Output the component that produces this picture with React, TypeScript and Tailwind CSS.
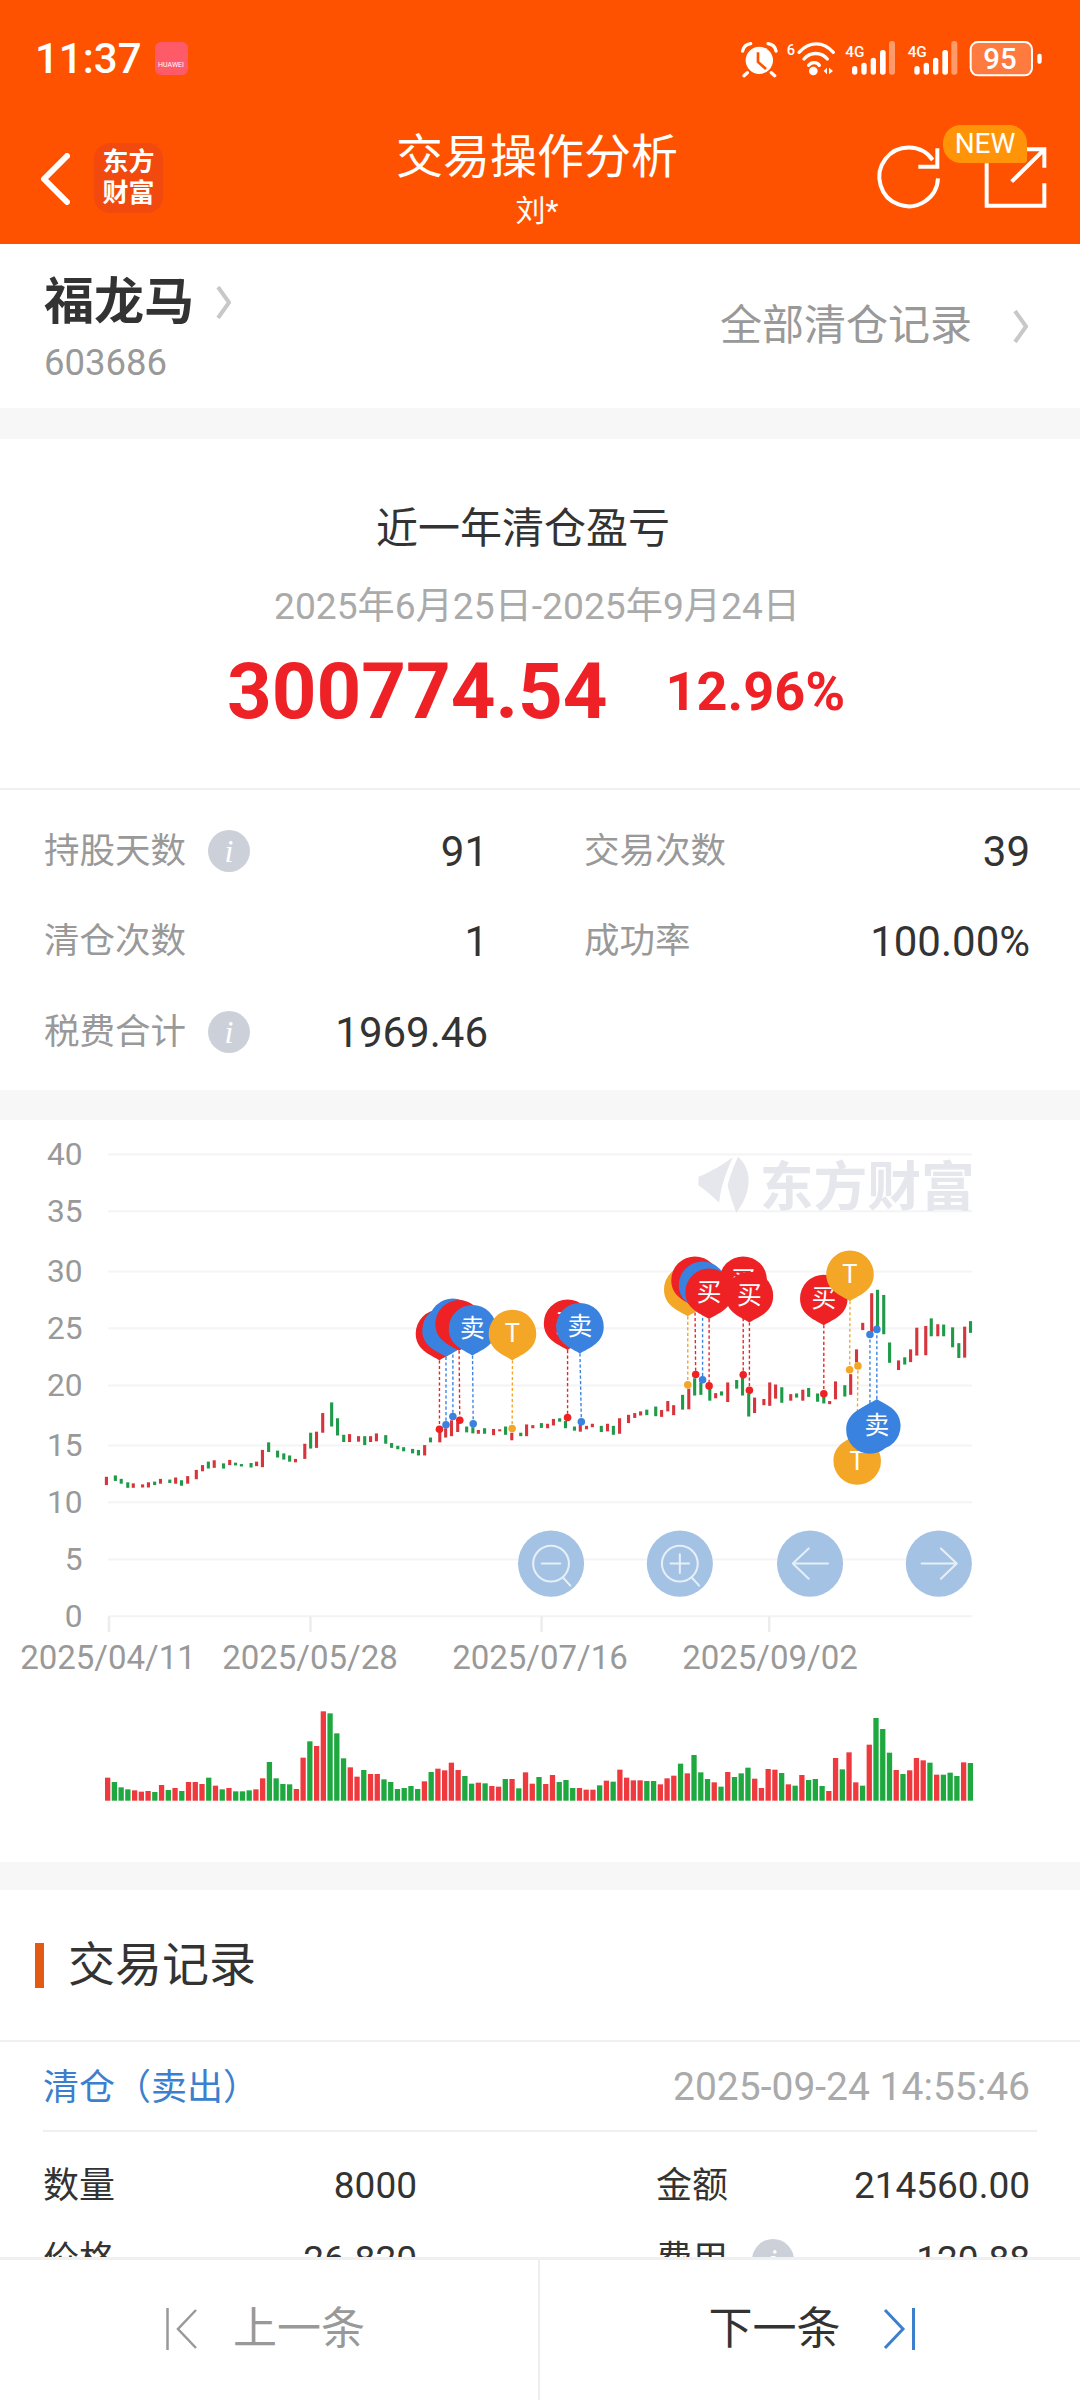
const RED = "#d8343c";
const GREEN = "#1f9a48";

// candles: x, top, bottom, colour flag (1 = up), in chart-zoom units
const candlesLeft: number[][] = [
  [309,1036,1060,1],[335,1032,1048,0],[352,1042,1056,0],[371,1052,1068,0],[387,1055,1068,1],[414,1058,1067,1],
  [431,1052,1067,1],[449,1050,1060,0],[466,1042,1056,1],[493,1044,1054,0],[510,1038,1056,1],[527,1046,1062,0],
  [545,1034,1056,1],[570,1016,1043,1],[588,1002,1020,1],[605,992,1012,0],[622,988,1010,1],[649,997,1012,0],
  [667,987,1002,1],[684,995,1003,0],[701,999,1006,0],[729,996,1009,0],[745,992,1005,1],[762,958,1008,1],
  [780,936,964,0],[806,960,980,0],[824,968,986,0],[841,974,992,0],[858,984,994,1],[885,940,984,1],
  [902,908,954,0],[919,905,952,1],[937,851,908,1],[963,820,890,0],[980,866,916,0],[998,914,935,0],
  [1015,912,935,1],[1041,918,934,1],[1059,918,944,0],[1076,918,935,1],[1093,910,933,1],[1120,915,940,0],
  [1137,938,952,0],[1155,946,956,0],[1172,950,962,0],[1198,955,968,0],[1215,958,974,0],[1233,944,974,1],
  [1250,922,936,0],[1277,898,936,1],[1294,895,922,1],[1311,872,918,1],[1329,878,906,1],[1355,890,907,0],
  [1373,892,910,0],[1389,900,911,1],[1407,895,911,0],[1433,897,915,1],[1451,898,904,1],[1468,890,914,0],
  [1486,908,930,1],[1512,908,918,0],[1529,884,918,1],[1547,886,895,1],
];
const candlesRight: number[][] = [
  [4,880,894,0],[22,882,895,1],[39,868,887,1],[57,866,876,0],[74,874,895,0],[100,890,902,0],[117,885,905,1],
  [135,888,898,1],[152,882,892,1],[178,888,906,0],[196,882,904,1],[213,888,914,0],[231,866,911,1],[257,856,880,1],
  [275,851,865,1],[292,846,858,1],[310,841,857,0],[336,832,860,0],[353,842,862,1],[371,816,846,1],[388,828,857,1],
  [414,798,841,0],[432,780,840,1],[449,750,800,0],[467,762,798,0],[493,780,815,0],[510,793,808,1],[527,788,800,0],
  [545,762,819,1],[571,755,780,0],[588,745,800,0],[606,795,861,0],[623,806,851,1],[650,810,828,1],[667,762,830,1],
  [684,768,809,1],[702,776,821,0],[728,796,815,1],[745,794,806,0],[763,783,815,1],[780,778,804,0],[806,794,818,0],
  [824,790,823,0],[841,816,825,1],[858,759,811,1],[885,770,803,0],[902,738,798,1],[919,666,704,1],[937,589,610,1],
  [963,503,615,1],[980,493,600,0],[998,508,622,0],[1015,646,705,0],[1041,698,726,1],[1059,689,710,0],[1076,666,703,1],
  [1094,603,684,1],[1120,598,683,1],[1136,576,628,0],[1155,593,628,1],[1172,594,628,0],[1198,602,660,0],[1216,648,691,0],
  [1233,600,690,1],[1250,584,618,0],
];

// volume tops read off the picture, sign marks colour: positive = red
const volumes = [
  353,-366,-382,-388,391,395,393,-396,375,-390,384,-393,366,366,372,-353,377,-388,384,-394,-394,-391,388,355,-306,-355,
  -372,-373,387,293,-244,258,154,-160,-220,-295,322,350,-330,342,342,-358,-366,-387,-384,-378,-387,364,-336,326,331,308,
  330,-348,-371,368,-370,378,380,-357,357,-385,337,371,-351,372,345,-366,-360,-384,384,389,389,-376,362,-365,329,353,361,
  361,-363,-363,373,355,347,-311,340,-285,-337,-357,367,-380,336,-351,-340,-323,356,384,327,329,-339,373,-377,345,-360,
  -357,-378,393,294,-328,277,367,-377,254,-174,-207,-278,330,-342,331,294,301,-308,344,-344,-338,-348,307,-309,
];

const gridLines = [100, 265, 440, 605, 771, 945, 1110, 1276, 1441];
const yLabels = ["40", "35", "30", "25", "20", "15", "10", "5", "0"];
const xLabels: [number, string][] = [[108, "2025/04/11"], [310, "2025/05/28"], [540, "2025/07/16"], [770, "2025/09/02"]];

const PIN_RED = "#ee2224";
const PIN_BLUE = "#3a82e0";
const PIN_ORANGE = "#f4a627";

function Pin({ x, cy, dotX, dotY, color, label, down = true }: { x: number; cy: number; dotX?: number; dotY: number; color: string; label?: string; down?: boolean }) {
  const s = down ? 1 : -1;
  return (
    <g>
      <path d={`M${x} ${cy + s * 78}L${dotX ?? x} ${dotY}`} stroke={color} strokeWidth="4" strokeDasharray="9 7" />
      <circle cx={dotX ?? x} cy={dotY} r="11" fill={color} />
      <path
        d={`M${x} ${cy + s * 78}C${x - 18} ${cy + s * 64} ${x - 69} ${cy + s * 52} ${x - 69} ${cy}A69 69 0 1 ${down ? 1 : 0} ${x + 69} ${cy}C${x + 69} ${cy + s * 52} ${x + 18} ${cy + s * 64} ${x} ${cy + s * 78}Z`}
        fill={color}
      />
      {label && (
        <text x={x} y={cy + 25} textAnchor="middle" fontSize={label === "T" ? 74 : 72} fill="#fff">
          {label}
        </text>
      )}
    </g>
  );
}

function Candles({ data }: { data: number[][] }) {
  return (
    <>
      {data.map(([x, top, bottom, up]) => (
        <rect key={x} x={x - 4.5} y={top} width="9" height={bottom - top} fill={up ? RED : GREEN} />
      ))}
    </>
  );
}

function RoundButton({ cx, children }: { cx: number; children: React.ReactNode }) {
  return (
    <g>
      <circle cx={cx} cy="1288" r="96" fill="#a4c2e3" />
      <g fill="none" stroke="#e6eff8" strokeWidth="6" strokeLinecap="round" strokeLinejoin="round">
        {children}
      </g>
    </g>
  );
}

function Chart() {
  return (
    <svg width="1080" height="742" viewBox="0 0 1080 742" className="block" fontFamily="Roboto, 'Noto Sans CJK SC', sans-serif">
      <g transform="scale(0.3444)">
        {gridLines.map((y) => (
          <rect key={y} x="314" y={y - 3} width="2509" height="6" fill="#f4f4f6" />
        ))}
        {[316, 901, 1572, 2233].map((x) => (
          <rect key={x} x={x - 3} y="1441" width="7" height="46" fill="#ececee" />
        ))}
        {yLabels.map((t, i) => (
          <text key={t} x="240" y={gridLines[i] + 31} textAnchor="end" fontSize="92" fill="#999">
            {t}
          </text>
        ))}
        <Candles data={candlesLeft} />
        <g transform="translate(1568 0)">
          <path d="M460 165C500 148 530 130 560 108C540 150 525 195 520 240C495 215 470 195 460 190Z" fill="#e6e7ec" />
          <path d="M575 107C612 140 622 200 570 270C560 240 550 215 545 190C552 160 565 130 575 107Z" fill="#e6e7ec" />
          <text x="638" y="250" fontSize="156" fontWeight="700" fill="#e6e7ec">东方财富</text>

          <Candles data={candlesRight} />

          <RoundButton cx={32}>
            <circle cx="32" cy="1288" r="52" />
            <path d="M5 1288H59M68 1330L88 1352" />
          </RoundButton>
          <RoundButton cx={406}>
            <circle cx="406" cy="1288" r="52" />
            <path d="M379 1288H433M406 1261V1315M442 1330L462 1352" />
          </RoundButton>
          <RoundButton cx={784}>
            <path d="M734 1288H836M780 1244L734 1288L780 1332" />
          </RoundButton>
          <RoundButton cx={1158}>
            <path d="M1108 1288H1210M1164 1244L1210 1288L1164 1332" />
          </RoundButton>

          <Pin x={80} cy={590} dotY={864} color={PIN_RED} label="买" />
          <Pin x={116} cy={600} dotX={120} dotY={876} color={PIN_BLUE} label="卖" />
          <Pin x={429} cy={492} dotY={769} color={PIN_ORANGE} />
          <Pin x={450} cy={465} dotX={452} dotY={739} color={PIN_RED} />
          <Pin x={472} cy={480} dotY={754} color={PIN_BLUE} />
          <Pin x={491} cy={500} dotY={772} color={PIN_RED} label="买" />
          <Pin x={590} cy={465} dotY={740} color={PIN_RED} label="买" />
          <Pin x={608} cy={510} dotY={785} color={PIN_RED} label="买" />
          <Pin x={824} cy={518} dotY={795} color={PIN_RED} label="买" />
          <Pin x={900} cy={448} dotX={899} dotY={725} color={PIN_ORANGE} label="T" />
          <Pin x={921} cy={990} dotX={923} dotY={714} color={PIN_ORANGE} label="T" down={false} />
          <Pin x={958} cy={900} dotY={623} color={PIN_BLUE} down={false} />
          <Pin x={978} cy={888} dotY={608} color={PIN_BLUE} label="卖" down={false} />
        </g>

        <Pin x={1276} cy={620} dotY={898} color={PIN_RED} />
        <Pin x={1295} cy={610} dotY={885} color={PIN_BLUE} />
        <Pin x={1315} cy={587} dotY={861} color={PIN_BLUE} />
        <Pin x={1333} cy={592} dotX={1335} dotY={872} color={PIN_RED} />
        <Pin x={1372} cy={606} dotX={1374} dotY={882} color={PIN_BLUE} label="卖" />
        <Pin x={1488} cy={620} dotX={1487} dotY={896} color={PIN_ORANGE} label="T" />
      </g>

      {xLabels.map(([x, t]) => (
        <text key={t} x={x} y="549" textAnchor="middle" fontSize="33" fill="#999">
          {t}
        </text>
      ))}

      {volumes.map((v, i) => {
        const top = 540 + Math.abs(v) / 3;
        return <rect key={i} x={105 + i * 6.74} y={top} width="5.3" height={680.7 - top} fill={v > 0 ? "#ee3a3f" : "#1ea83f"} />;
      })}
    </svg>
  );
}

function InfoDot() {
  return (
    <span className="flex h-[42px] w-[42px] shrink-0 items-center justify-center rounded-full bg-[#ccd1d9] font-['Liberation_Serif',serif] text-[32px] leading-none text-white italic">
      i
    </span>
  );
}

function Chevron({ className }: { className: string }) {
  return (
    <svg viewBox="0 0 15 33" fill="none" stroke="#c8c8c8" strokeWidth="4" className={className}>
      <path d="M2 1L13 16.5L2 32" />
    </svg>
  );
}

function Stat({ label, value, info }: { label: string; value: string; info?: boolean }) {
  return (
    <div className="flex h-[90.5px] items-center justify-between">
      <div className="flex items-center gap-[22px] text-[35.5px] text-[#999]">
        {label}
        {info && <InfoDot />}
      </div>
      <span className="text-[42px] text-[#333]">{value}</span>
    </div>
  );
}

function StatusIcons() {
  const signal = (offset: number) => (
    <g transform={`translate(${offset} 0)`} fill="#fff">
      <text x="346" y="78" fontSize="46" fontWeight="500" fontFamily="Roboto, sans-serif">4G</text>
      <rect x="366" y="105" width="16" height="26" rx="8" />
      <rect x="394" y="95" width="16" height="36" rx="8" />
      <rect x="422" y="80" width="16" height="51" rx="8" />
      <rect x="450" y="57" width="17" height="74" rx="8" />
      <rect x="477" y="30" width="18" height="101" rx="8" fill="#ff9a6b" />
    </g>
  );
  return (
    <svg width="330" height="55" viewBox="0 0 990 165" fill="none" className="block">
      {/* alarm */}
      <circle cx="88" cy="88" r="41" fill="#fff" />
      <path d="M84 64V93L108 114" stroke="#ff5200" strokeWidth="8" />
      <path d="M38 60C40 48 50 40 62 38M138 60C136 48 126 40 114 38M52 125L42 134M124 125L134 134" stroke="#fff" strokeWidth="10" strokeLinecap="round" />
      {/* wifi */}
      <text x="170" y="72" fontSize="44" fontWeight="500" fill="#fff" fontFamily="Roboto, sans-serif">6</text>
      <path d="M207 64C238 30 280 30 310 64M222 84C240 62 274 62 292 84M236 103C244 92 262 92 268 103" stroke="#fff" strokeWidth="10" strokeLinecap="round" />
      <circle cx="250" cy="120" r="13" fill="#fff" />
      <path d="M281 120L291 110V130ZM309 120L297 110V130Z" fill="#fff" />
      {signal(0)}
      {signal(187)}
      {/* battery */}
      <rect x="722" y="33" width="184" height="100" rx="22" fill="#ff7a3f" stroke="#fff" strokeWidth="6" />
      <text x="810" y="113" textAnchor="middle" fontSize="88" fontWeight="500" fill="#fff" fontFamily="Roboto, sans-serif">95</text>
      <rect x="922" y="68" width="13" height="30" rx="6" fill="#fff" />
    </svg>
  );
}

export default function App() {
  return (
    <div className="flex h-[2400px] w-[1080px] flex-col overflow-hidden bg-white font-['Roboto','Noto_Sans_CJK_SC',sans-serif]">
      <div className="flex-1 overflow-hidden">
        {/* header */}
        <header className="h-[244px] bg-[#ff5200] text-white">
          <div className="flex h-[116px] items-center justify-between pr-[20px] pl-[35px]">
            <div className="flex items-center gap-[13px]">
              <span className="text-[42px] font-medium">11:37</span>
              <span className="flex h-[33px] w-[33px] flex-col items-center justify-end rounded-[6px] bg-[#ff5a68] pb-[6px] text-[7px] leading-none text-white">
                HUAWEI
              </span>
            </div>
            <StatusIcons />
          </div>
          <div className="grid h-[128px] grid-cols-[1fr_auto_1fr]">
            <div className="flex items-start gap-[24px] pt-[27px] pl-[40px]">
              <svg width="30" height="52" viewBox="0 0 30 52" fill="none" stroke="#fff" strokeWidth="6" strokeLinecap="round" strokeLinejoin="round" className="mt-[10px]">
                <path d="M27 3L4 26L27 49" />
              </svg>
              <div className="flex h-[70px] w-[69px] items-center justify-center rounded-[16px] bg-[#f2490f] text-center text-[26px] leading-[31px] font-bold">
                东方
                <br />
                财富
              </div>
            </div>
            <div className="-ml-[6px] flex flex-col items-center">
              <div className="mt-[12px] text-[47px] leading-[58px]">交易操作分析</div>
              <div className="mt-[7px] text-[30px] leading-[36px]">刘*</div>
            </div>
            <div className="relative flex items-start justify-end pr-[20px]">
              <svg width="200" height="105" viewBox="0 0 600 315" fill="none" stroke="#fff" strokeWidth="12" className="-mt-[1px]">
                <path d="M234 190A88 88 0 1 1 218 135" />
                <path d="M232 100V155H175" />
                <path d="M380 145V272H553V205" />
                <path d="M500 103H553V158M455 200L553 103" />
              </svg>
              <span className="absolute top-[9px] right-[53px] flex h-[38px] w-[84px] items-center justify-center rounded-t-[18px] rounded-br-[3px] rounded-bl-[18px] bg-[#ff9408] text-[28px] text-white">
                NEW
              </span>
            </div>
          </div>
        </header>

        {/* stock row */}
        <div className="flex h-[164px] justify-between pr-[52px] pl-[44px]">
          <div>
            <div className="mt-[24px] flex items-center gap-[22px]">
              <span className="text-[50px] leading-[68px] font-bold text-[#333]">福龙马</span>
              <Chevron className="h-[33px] w-[15px]" />
            </div>
            <div className="mt-[7px] text-[36.5px] leading-[40px] text-[#999]">603686</div>
          </div>
          <div className="mt-[50px] flex h-[64px] items-center gap-[41px]">
            <span className="text-[42px] leading-[68px] text-[#999]">全部清仓记录</span>
            <Chevron className="h-[33px] w-[15px]" />
          </div>
        </div>
        <div className="h-[31px] bg-[#f7f7f7]" />

        {/* summary */}
        <section className="flex h-[351px] flex-col items-center border-b-2 border-[#f0f0f0]">
          <div className="mt-[62px] -ml-[34px] text-[42px] leading-[56px] text-[#333]">近一年清仓盈亏</div>
          <div className="mt-[27px] -ml-[6px] text-[37.2px] leading-[44px] text-[#aaa]">2025年6月25日-2025年9月24日</div>
          <div className="mt-[19px] -ml-[8px] flex items-center gap-[58px] font-bold text-[#ee2226]">
            <span className="text-[78px] leading-[90px]">300774.54</span>
            <span className="text-[54px] leading-[90px]">12.96%</span>
          </div>
        </section>

        {/* stats */}
        <section className="grid h-[300px] grid-cols-[444px_1fr] content-start gap-x-[96px] pt-[16px] pr-[50px] pl-[44px]">
          <Stat label="持股天数" value="91" info />
          <Stat label="交易次数" value="39" />
          <Stat label="清仓次数" value="1" />
          <Stat label="成功率" value="100.00%" />
          <Stat label="税费合计" value="1969.46" info />
        </section>
        <div className="h-[30px] bg-[#f7f7f7]" />

        <section className="h-[742px]">
          <Chart />
        </section>
        <div className="h-[28px] bg-[#f7f7f7]" />

        {/* trade records */}
        <section>
          <div className="flex h-[152px] items-center gap-[24px] border-b-2 border-[#f0f0f0] pl-[35px]">
            <span className="h-[45px] w-[9px] bg-[#e35a14]" />
            <span className="text-[47px] text-[#333]">交易记录</span>
          </div>
          <div className="mx-[43px]">
            <div className="flex h-[90px] items-center justify-between border-b-2 border-[#f0f0f0] pt-[3px] pr-[7px]">
              <span className="text-[36px] text-[#3b7fce]">清仓（卖出）</span>
              <span className="text-[39px] text-[#aaa]">2025-09-24 14:55:46</span>
            </div>
            <div className="grid grid-cols-[374px_1fr] gap-x-[239px] pt-[17px] pr-[7px] text-[36px] text-[#333]">
              <div className="flex h-[74px] items-center justify-between">
                <span>数量</span>
                <span className="text-[37px]">8000</span>
              </div>
              <div className="flex h-[74px] items-center justify-between">
                <span>金额</span>
                <span className="text-[37px]">214560.00</span>
              </div>
              <div className="flex h-[74px] items-center justify-between">
                <span>价格</span>
                <span className="text-[37px]">26.820</span>
              </div>
              <div className="flex h-[74px] items-center justify-between">
                <span className="flex items-center gap-[24px]">
                  费用
                  <InfoDot />
                </span>
                <span className="text-[37px]">120.88</span>
              </div>
            </div>
          </div>
        </section>
      </div>

      {/* bottom pager */}
      <footer className="grid h-[143px] shrink-0 grid-cols-2 border-t-[3px] border-[#f0f0f0] bg-white text-[44px]">
        <div className="flex items-center justify-center gap-[35px] border-r-2 border-[#eee] pr-[7px] pb-[2px] text-[#999]">
          <svg width="32" height="42" viewBox="0 0 32 42" fill="none" stroke="#999" strokeWidth="2.5">
            <path d="M1.5 0V42M30 2L12 21L30 40" />
          </svg>
          上一条
        </div>
        <div className="flex items-center justify-center gap-[42px] pb-[2px] pl-[3px] text-[#333]">
          下一条
          <svg width="32" height="42" viewBox="0 0 32 42" fill="none" stroke="#3b7fce" strokeWidth="3">
            <path d="M30.5 0V42M2 2L20 21L2 40" />
          </svg>
        </div>
      </footer>
    </div>
  );
}
